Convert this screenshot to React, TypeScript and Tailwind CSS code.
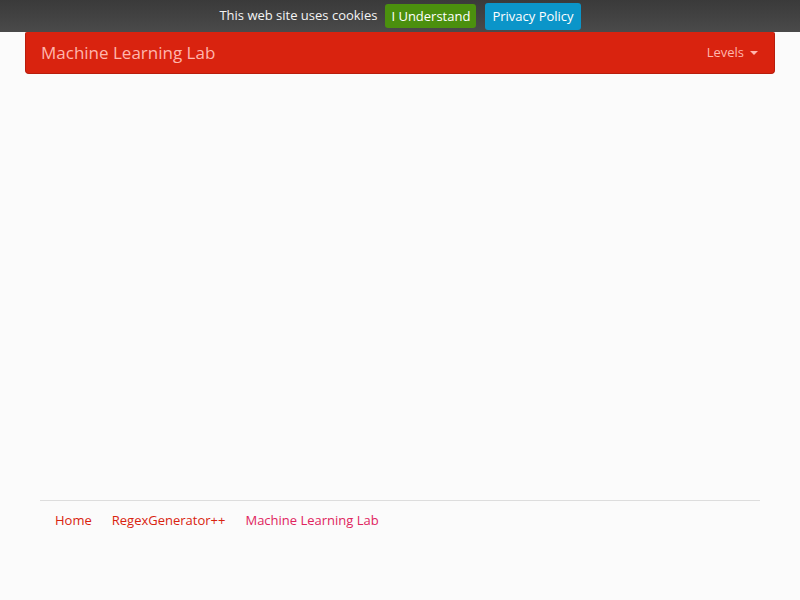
export default function App() {
  return (
    <div className="min-h-[600px] bg-[#fbfbfb] font-['Open_Sans',sans-serif]">
      <div className="h-8 flex items-center justify-center gap-2 bg-gradient-to-b from-[#3a3a3a] to-[#4a4a4a] text-[13px] text-[#f4f4f4]">
        <span>This web site uses cookies</span>
        <button className="h-6 px-[6px] rounded-[3px] bg-[#4b900e] text-[13px] text-white leading-none">I Understand</button>
        <button className="h-[27px] ml-[1px] px-[7px] rounded-[3px] bg-[#0b95c9] text-[13px] text-white leading-none">Privacy Policy</button>
      </div>
      <div className="mx-[25px] h-[42px] flex items-center justify-between pl-[15px] pr-4 bg-[#d9230f] border border-[#b81d0c] border-t-0 rounded-b-[4px] rounded-t-[2px]">
        <span className="text-[17px] text-[#ffb6ad]">Machine Learning Lab</span>
        <span className="flex items-center gap-[6px] text-[13px] text-[#ffb6ad]">
          Levels
          <span className="w-0 h-0 border-x-[4px] border-x-transparent border-t-[4px] border-t-[#ffb6ad]"></span>
        </span>
      </div>
      <div className="h-[426px]"></div>
      <div className="mx-10 border-t border-[#dddddd] pt-[10px] px-[15px] flex gap-5 text-[13px]">
        <a className="text-[#d9230f]">Home</a>
        <a className="text-[#d9230f]">RegexGenerator++</a>
        <a className="text-[#e0245e]">Machine Learning Lab</a>
      </div>
    </div>
  );
}
